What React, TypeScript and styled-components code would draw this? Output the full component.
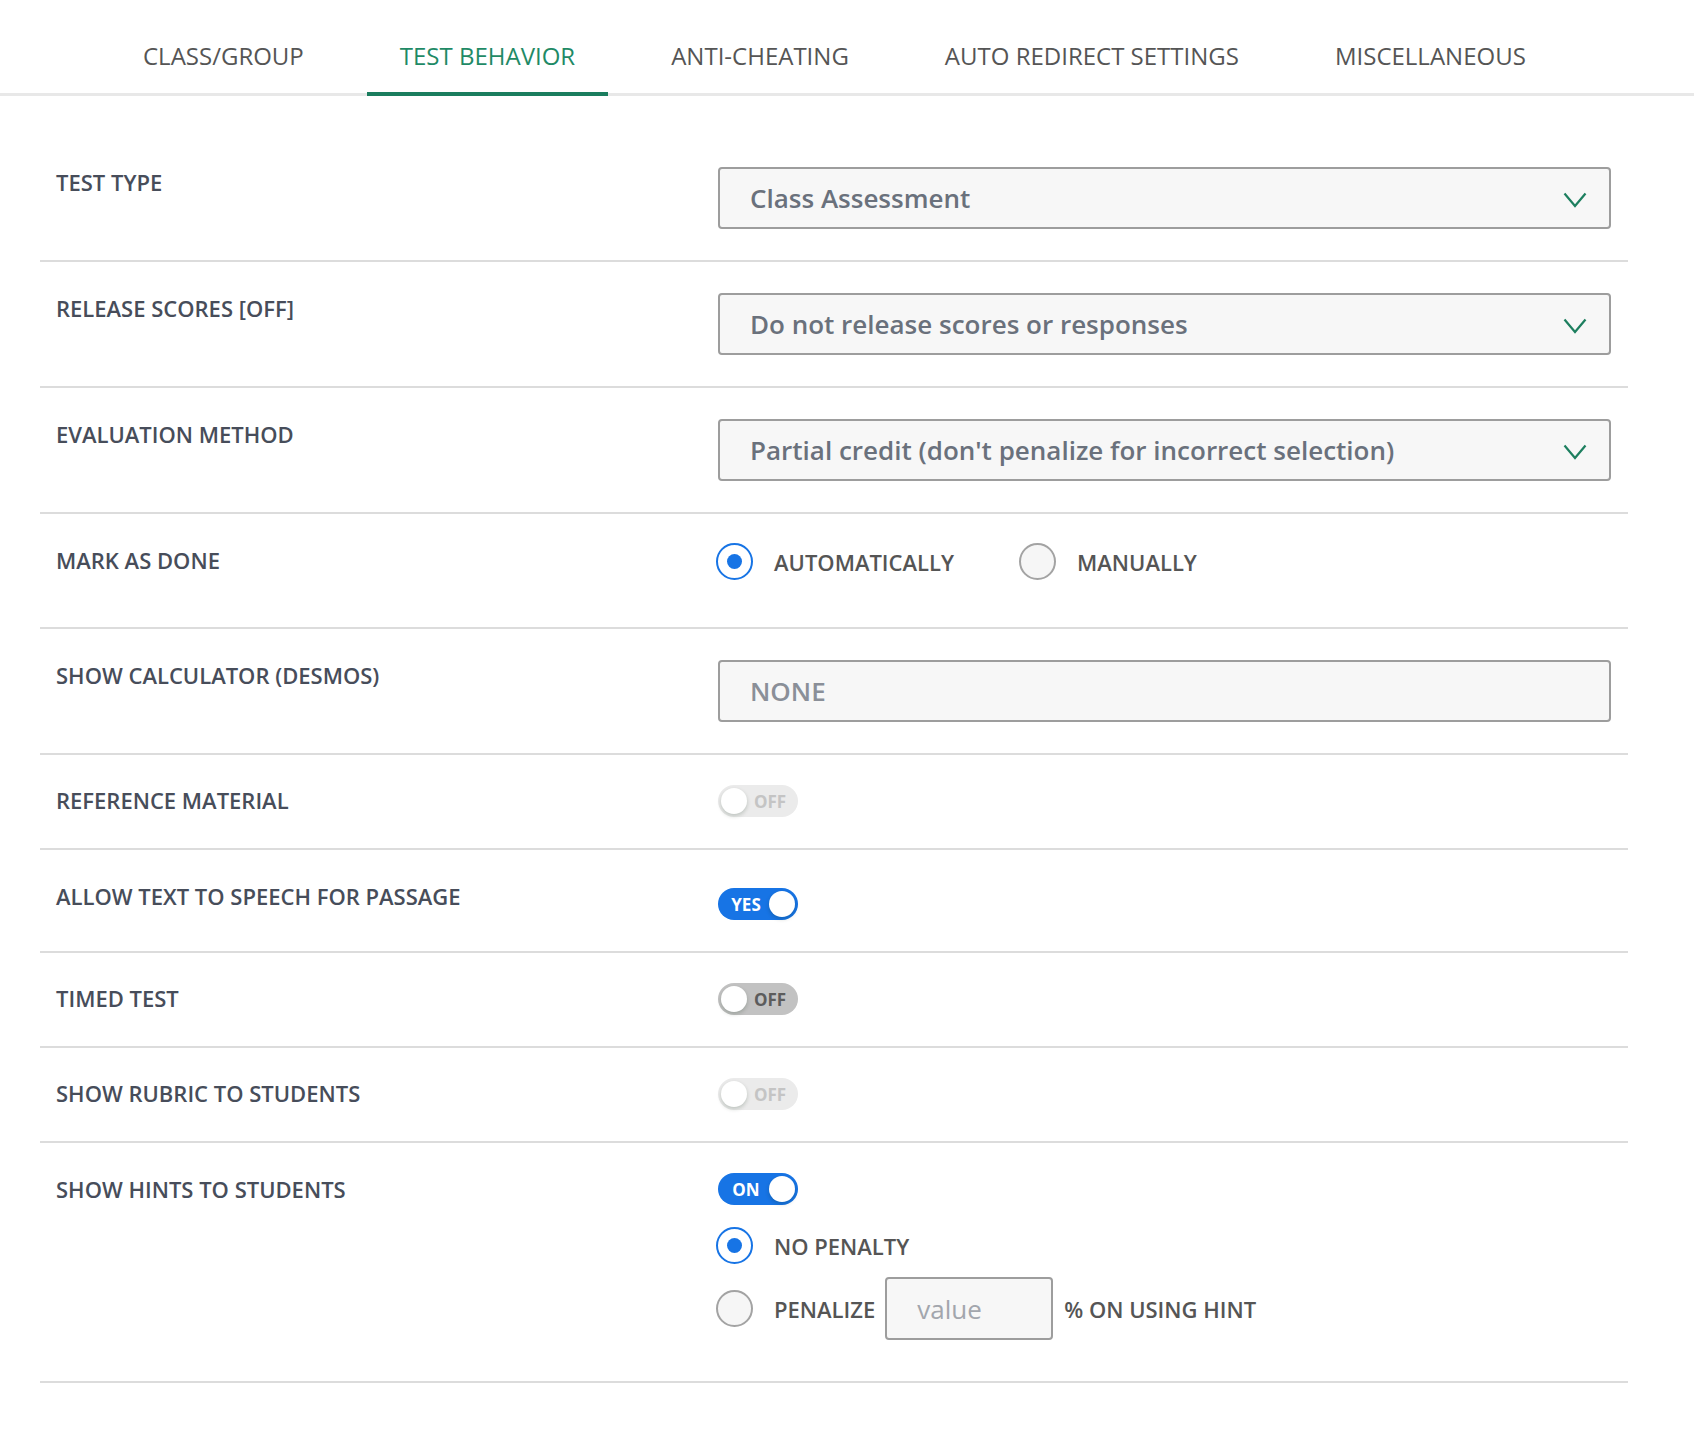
import styled, { createGlobalStyle } from 'styled-components';

const GlobalStyle = createGlobalStyle`
  body {
    margin: 0;
    background: #ffffff;
    font-family: 'Open Sans', 'Liberation Sans', sans-serif;
  }
`;

const Page = styled.div`
  width: 1694px;
  min-height: 1438px;
  background: #ffffff;
`;

const TabBar = styled.nav`
  display: flex;
  gap: 30px;
  padding-left: 110px;
  border-bottom: 3px solid #e8e8e8;
`;

const Tab = styled.div<{ $active?: boolean }>`
  box-sizing: border-box;
  height: 96px;
  margin-bottom: -3px;
  padding: 19px 33px 0;
  display: flex;
  align-items: center;
  font-size: 24px;
  font-weight: 400;
  color: ${({ $active }) => ($active ? '#1f8a66' : '#555555')};
  border-bottom: 4px solid ${({ $active }) => ($active ? '#1a7d5e' : 'transparent')};
  white-space: nowrap;
`;

const Form = styled.div`
  width: 1588px;
  padding: 40px 0 0 40px;
`;

const Row = styled.div<{ $pad?: string }>`
  display: grid;
  grid-template-columns: 662px 1fr;
  padding: ${({ $pad }) => $pad || '31px 17px 31px 16px'};
  border-bottom: 2px solid #dcdcdc;
`;

const Label = styled.div`
  font-size: 22px;
  font-weight: 600;
  line-height: 30px;
  color: #474d5a;
  white-space: nowrap;
`;

const Control = styled.div<{ $offset?: number }>`
  display: flex;
  flex-direction: column;
  align-items: flex-start;
  padding-top: ${({ $offset }) => $offset || 0}px;
`;

const Select = styled.div<{ $muted?: boolean }>`
  box-sizing: border-box;
  width: 100%;
  height: 62px;
  padding: 0 22px 0 30px;
  display: flex;
  align-items: center;
  justify-content: space-between;
  background: #f7f7f7;
  border: 2px solid #9d9d9d;
  border-radius: 4px;
  font-size: 26px;
  font-weight: 600;
  color: ${({ $muted }) => ($muted ? '#8a8f98' : '#6a717c')};

  svg {
    margin-top: 3px;
  }
`;

const RadioGroup = styled.div`
  display: flex;
  align-items: flex-start;
  gap: 67px;
  height: 53px;
  margin-top: -2px;
`;

const RadioOption = styled.label<{ $height?: number; $top?: number }>`
  display: flex;
  align-items: center;
  height: ${({ $height }) => $height || 37}px;
  margin-top: ${({ $top }) => $top || 0}px;
`;

const RadioCircle = styled.span<{ $checked?: boolean }>`
  box-sizing: border-box;
  width: 37px;
  height: 37px;
  flex: none;
  margin-left: -2px;
  margin-right: 21px;
  border-radius: 50%;
  display: flex;
  align-items: center;
  justify-content: center;
  background: ${({ $checked }) => ($checked ? '#ffffff' : '#f6f6f6')};
  border: 2px solid ${({ $checked }) => ($checked ? '#1774e5' : '#a3a3a3')};

  &::after {
    content: '';
    display: ${({ $checked }) => ($checked ? 'block' : 'none')};
    width: 15px;
    height: 15px;
    border-radius: 50%;
    background: #1774e5;
  }
`;

const RadioText = styled.span`
  font-size: 22px;
  font-weight: 600;
  color: #555555;
  white-space: nowrap;
`;

const ToggleLine = styled.div`
  display: flex;
  align-items: center;
  height: 30px;
`;

type ToggleKind = 'disabled' | 'on' | 'off';

const toggleBg: Record<ToggleKind, string> = {
  disabled: '#ebebeb',
  on: '#1774e5',
  off: '#c2c2c2',
};

const toggleText: Record<ToggleKind, string> = {
  disabled: '#c4c4c4',
  on: '#ffffff',
  off: '#5c5c5c',
};

const ToggleTrack = styled.div<{ $kind: ToggleKind }>`
  box-sizing: border-box;
  width: 80px;
  height: 32px;
  flex: none;
  border-radius: 16px;
  padding: 0 3px;
  display: flex;
  align-items: center;
  flex-direction: ${({ $kind }) => ($kind === 'on' ? 'row-reverse' : 'row')};
  justify-content: space-between;
  background: ${({ $kind }) => toggleBg[$kind]};
`;

const ToggleKnob = styled.span`
  box-sizing: border-box;
  width: 26px;
  height: 26px;
  border-radius: 50%;
  background: #ffffff;
  box-shadow: 0 2px 4px rgba(0, 35, 11, 0.2);
`;

const ToggleLabel = styled.span<{ $kind: ToggleKind }>`
  flex: 1;
  text-align: center;
  font-size: 17px;
  font-weight: 700;
  line-height: 1;
  color: ${({ $kind }) => toggleText[$kind]};
  padding: ${({ $kind }) => ($kind === 'on' ? '0 2px 0 4px' : '0 4px 0 2px')};
`;

const PenaltyInput = styled.div`
  box-sizing: border-box;
  width: 168px;
  height: 63px;
  margin: 0 11px 0 10px;
  padding-left: 30px;
  display: flex;
  align-items: center;
  background: #f7f7f7;
  border: 2px solid #9d9d9d;
  border-radius: 4px;
  font-size: 26px;
  color: #a2a6ad;
`;

const HintOptions = styled.div`
  display: flex;
  flex-direction: column;
  margin-bottom: 10px;
`;

const Chevron = () => (
  <svg width="24" height="16" viewBox="0 0 24 16" fill="none">
    <path d="M1.5 1.5 L12 14 L22.5 1.5" stroke="#1d7f5f" strokeWidth="2.2" />
  </svg>
);

const Toggle = ({ kind, text }: { kind: ToggleKind; text: string }) => (
  <ToggleTrack $kind={kind}>
    <ToggleKnob />
    <ToggleLabel $kind={kind}>{text}</ToggleLabel>
  </ToggleTrack>
);

const tabs = ['CLASS/GROUP', 'TEST BEHAVIOR', 'ANTI-CHEATING', 'AUTO REDIRECT SETTINGS', 'MISCELLANEOUS'];

const selects = [
  { label: 'TEST TYPE', value: 'Class Assessment' },
  { label: 'RELEASE SCORES [OFF]', value: 'Do not release scores or responses' },
  { label: 'EVALUATION METHOD', value: "Partial credit (don't penalize for incorrect selection)" },
];

export default function App() {
  return (
    <Page>
      <GlobalStyle />
      <TabBar>
        {tabs.map((t) => (
          <Tab key={t} $active={t === 'TEST BEHAVIOR'}>
            {t}
          </Tab>
        ))}
      </TabBar>

      <Form>
        {selects.map((s) => (
          <Row key={s.label}>
            <Label>{s.label}</Label>
            <Control>
              <Select>
                <span>{s.value}</span>
                <Chevron />
              </Select>
            </Control>
          </Row>
        ))}

        <Row>
          <Label>MARK AS DONE</Label>
          <RadioGroup>
            <RadioOption>
              <RadioCircle $checked />
              <RadioText>AUTOMATICALLY</RadioText>
            </RadioOption>
            <RadioOption>
              <RadioCircle />
              <RadioText>MANUALLY</RadioText>
            </RadioOption>
          </RadioGroup>
        </Row>

        <Row>
          <Label>SHOW CALCULATOR (DESMOS)</Label>
          <Control>
            <Select $muted>
              <span>NONE</span>
            </Select>
          </Control>
        </Row>

        <Row $pad="30px 17px 31px 16px">
          <Label>REFERENCE MATERIAL</Label>
          <Control>
            <Toggle kind="disabled" text="OFF" />
          </Control>
        </Row>

        <Row>
          <Label>ALLOW TEXT TO SPEECH FOR PASSAGE</Label>
          <Control $offset={7}>
            <Toggle kind="on" text="YES" />
          </Control>
        </Row>

        <Row $pad="30px 17px 31px 16px">
          <Label>TIMED TEST</Label>
          <Control>
            <Toggle kind="off" text="OFF" />
          </Control>
        </Row>

        <Row $pad="30px 17px 31px 16px">
          <Label>SHOW RUBRIC TO STUDENTS</Label>
          <Control>
            <Toggle kind="disabled" text="OFF" />
          </Control>
        </Row>

        <Row>
          <Label>SHOW HINTS TO STUDENTS</Label>
          <Control>
            <ToggleLine>
              <Toggle kind="on" text="ON" />
            </ToggleLine>
            <HintOptions>
              <RadioOption $top={23}>
                <RadioCircle $checked />
                <RadioText>NO PENALTY</RadioText>
              </RadioOption>
              <RadioOption $top={13} $height={63}>
                <RadioCircle />
                <RadioText>PENALIZE</RadioText>
                <PenaltyInput>value</PenaltyInput>
                <RadioText>% ON USING HINT</RadioText>
              </RadioOption>
            </HintOptions>
          </Control>
        </Row>
      </Form>
    </Page>
  );
}
